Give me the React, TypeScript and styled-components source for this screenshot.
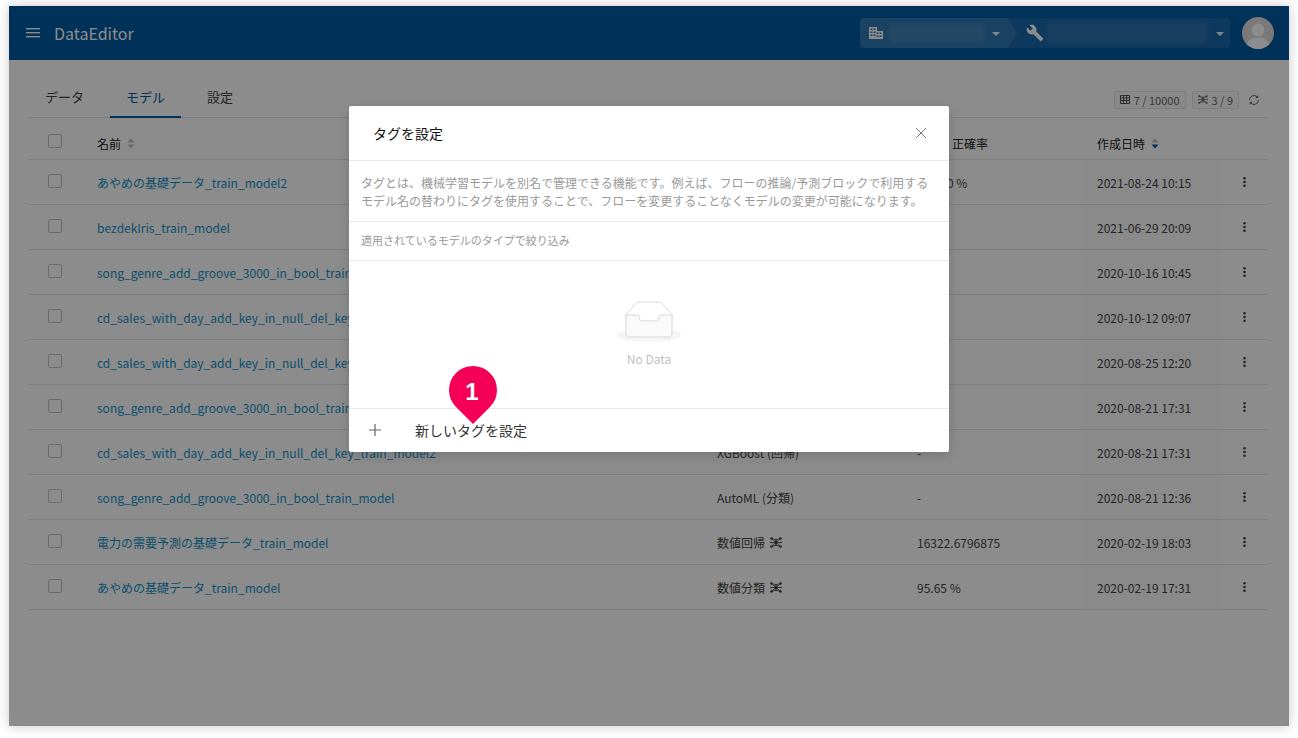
import React from 'react';
import styled, { createGlobalStyle } from 'styled-components';

const Global = createGlobalStyle`
  html, body { margin: 0; padding: 0; background: #fff; }
  body { font-family: "Noto Sans CJK JP", "Noto Sans", sans-serif; }
  * { box-sizing: border-box; }
`;
const Page = styled.div`padding: 6px 9px; height: 738px; overflow: hidden;`;
const Frame = styled.div`
  position: relative; width: 1280px; height: 720px; background: #fff;
  box-shadow: 0 0 12px rgba(0,0,0,.22); overflow: hidden; color: #333;
`;
const Header = styled.header`
  height: 54px; background: #0059a2; color: #fff; display: flex; align-items: center; padding: 0 15px 0 17px;
`;
const Burger = styled.svg`width: 14px; height: 12px; margin-right: 14px; margin-top: -1px;`;
const Brand = styled.div`font-size: 16px; flex: 1;`;
const Combo = styled.div`
  width: 370px; height: 30px; border-radius: 4px; background: rgba(255,255,255,.1);
  display: flex; align-items: center; position: relative; margin-right: 12px;
`;
const ComboLeft = styled.div`
  width: 157px; height: 100%; display: flex; align-items: center; padding-left: 9px; position: relative; flex: none;
  background: rgba(255,255,255,.1); border-radius: 4px 0 0 4px;
  clip-path: polygon(0 0, 148px 0, 157px 50%, 148px 100%, 0 100%);
`;
const ComboRight = styled.div`
  flex: 1; height: 100%; display: flex; align-items: center; padding-left: 9px; position: relative;
`;
const Blurred = styled.div<{ $w: number; $gap: number }>`
  width: ${p => p.$w}px; height: 20px; margin-left: ${p => p.$gap}px; background: rgba(255,255,255,.08); filter: blur(2px);
`;
const Caret = styled.div<{ $r: number }>`
  position: absolute; right: ${p => p.$r}px; top: 14px; width: 0; height: 0;
  border-left: 4.500px solid transparent; border-right: 4.500px solid transparent; border-top: 4px solid rgba(255,255,255,.95);
`;
const Avatar = styled.svg`width: 32px; height: 32px; border-radius: 50%;`;

const Main = styled.main`padding: 19px 21px 0 19px;`;
const TabBar = styled.div`
  height: 39px; border-bottom: 1px solid #e4e4e4; display: flex; align-items: stretch; padding-left: 1px; gap: 10px; position: relative;
`;
const Tab = styled.div<{ $active?: boolean }>`
  padding: 0 16px; font-size: 13px; line-height: 36px; height: 39px;
  color: ${p => p.$active ? '#00599f' : '#444'};
  border-bottom: 2px solid ${p => p.$active ? '#00599f' : 'transparent'};
`;
const Stats = styled.div`margin-left: auto; display: flex; align-items: center; gap: 6px; padding: 11px 8px 0 0; height: 30px;`;
const Chip = styled.div`
  height: 18px; border: 1px solid #e4e4e4; background: #fafafa; border-radius: 2px; display: flex; align-items: center; gap: 4px;
  padding: 0 5px; font-size: 11px; color: #666;
`;
const Sync = styled.svg`width: 12px; height: 12px; margin-left: 3px;`;

const Row = styled.div<{ $head?: boolean }>`
  display: grid; grid-template-columns: 53px 620px 200px 180px 140px 47px;
  height: ${p => p.$head ? 42 : 45}px; border-bottom: 1px solid #e4e4e4; font-size: 12px; color: #444;
  align-items: stretch;
`;
const Cell = styled.div<{ $sorted?: boolean; $head?: boolean }>`
  display: flex; align-items: center; padding: ${p => p.$head ? '10px 16px 0' : '0 16px'}; white-space: nowrap;
  background: ${p => p.$sorted ? '#fbfbfb' : 'transparent'}; gap: 6px;
`;
const HeadCell = styled(Cell)`font-weight: 400; color: #222; background: transparent;`;
const CheckCell = styled.div<{ $head?: boolean }>`
  display: flex; padding: ${p => p.$head ? '16px 0 0 20px' : '14px 0 0 20px'};
`;
const Check = styled.div`width: 14px; height: 14px; border: 1px solid #c4c4c4; border-radius: 2px; background: #fff;`;
const NameLink = styled.span`color: #1490c8;`;
const Spacer = styled.span`display: inline-block; width: 29px;`;
const SortIcon = styled.svg`width: 8px; height: 11px;`;
const Kebab = styled.svg`width: 3px; height: 10px; margin: 17px 0 0 22px; display: block;`;

const Overlay = styled.div`
  position: absolute; inset: 0; background: rgba(0,0,0,.45); display: flex; justify-content: center; padding-top: 100px;
`;
const Modal = styled.div`
  position: relative; width: 600px; height: 346px; background: #fff; border-radius: 2px; display: flex; flex-direction: column;
  box-shadow: 0 4px 12px rgba(0,0,0,.15);
`;
const ModalHead = styled.div`
  height: 55px; border-bottom: 1px solid #e8e8e8; padding: 0 22px 0 24px; display: flex; align-items: center; justify-content: space-between;
  font-size: 14px; font-weight: 400; color: #111;
`;
const Desc = styled.div`
  height: 61px; border-bottom: 1px solid #e8e8e8; padding: 13px 12px 0; font-size: 12px; line-height: 18px; color: #999;
`;
const Filter = styled.div`
  height: 39px; border-bottom: 1px solid #e8e8e8; padding: 0 12px 2px; display: flex; align-items: center; font-size: 11px; color: #999;
`;
const Empty = styled.div`
  flex: 1; border-bottom: 1px solid #e8e8e8; display: flex; flex-direction: column; align-items: center; padding-top: 40px;
  font-size: 12px; color: #bfbfbf;
`;
const EmptyIcon = styled.svg`width: 64px; height: 41px; margin-bottom: 8px;`;
const Footer = styled.div`
  height: 43px; display: flex; align-items: center; font-size: 14px; color: #333; padding: 0 0 1px 19px;
`;
const Plus = styled.svg`width: 14px; height: 14px; margin: -1px 33px 0 0;`;
const Pin = styled.div`
  position: absolute; left: 100px; top: 260px; width: 48px; height: 48px; display: flex; align-items: center; justify-content: center;
  &::before { content: ""; position: absolute; inset: 0; background: #f50057; border-radius: 50% 50% 50% 0; transform: rotate(-45deg); }
`;
const PinNum = styled.span`
  position: relative; color: #fff; font-family: "Liberation Sans", sans-serif; font-size: 24px; font-weight: 700; padding: 3px 2px 0 0;
`;
const NetMark = styled.span`display: inline-flex; margin-left: -1px;`;

const Net = ({ w = 12 }: { w?: number }) => (
  <svg width={w} height={w - 1} viewBox="0 0 12 11" fill="none" stroke="currentColor">
    <path d="M1.500 1.500L10.500 9.500M10.500 1.500L1.500 9.500M.8 5.500H4M8 5.500H11.200M6 2.800V8.200M1.500 1.500L6 2.800L10.500 1.500M1.500 9.500L6 8.200L10.500 9.500" strokeWidth=".8" />
    <circle cx="1.500" cy="1.500" r="1.300" fill="currentColor" stroke="none" /><circle cx="10.500" cy="1.500" r="1.300" fill="currentColor" stroke="none" />
    <circle cx="1.500" cy="9.500" r="1.300" fill="currentColor" stroke="none" /><circle cx="10.500" cy="9.500" r="1.300" fill="currentColor" stroke="none" />
    <circle cx="6" cy="5.500" r="1.800" fill="currentColor" stroke="none" />
    <circle cx="6" cy="2.800" r=".8" fill="currentColor" stroke="none" /><circle cx="6" cy="8.200" r=".8" fill="currentColor" stroke="none" />
    <circle cx=".9" cy="5.500" r=".8" fill="currentColor" stroke="none" /><circle cx="11.100" cy="5.500" r=".8" fill="currentColor" stroke="none" />
  </svg>
);

const rows = [
  { n: 'あやめの基礎データ_train_model2', t: '', a: '100.00 %', d: '2021-08-24 10:15' },
  { n: 'bezdekIris_train_model', t: '', a: '', d: '2021-06-29 20:09' },
  { n: 'song_genre_add_groove_3000_in_bool_train_model5', t: '', a: '', d: '2020-10-16 10:45' },
  { n: 'cd_sales_with_day_add_key_in_null_del_key_train_model4', t: '', a: '', d: '2020-10-12 09:07' },
  { n: 'cd_sales_with_day_add_key_in_null_del_key_train_model3', t: '', a: '', d: '2020-08-25 12:20' },
  { n: 'song_genre_add_groove_3000_in_bool_train_model2', t: '', a: '', d: '2020-08-21 17:31' },
  { n: 'cd_sales_with_day_add_key_in_null_del_key_train_model2', t: 'XGBoost (回帰)', a: '-', d: '2020-08-21 17:31' },
  { n: 'song_genre_add_groove_3000_in_bool_train_model', t: 'AutoML (分類)', a: '-', d: '2020-08-21 12:36' },
  { n: '電力の需要予測の基礎データ_train_model', t: '数値回帰', net: true, a: '16322.6796875', d: '2020-02-19 18:03' },
  { n: 'あやめの基礎データ_train_model', t: '数値分類', net: true, a: '95.65 %', d: '2020-02-19 17:31' },
];

const Sort = ({ on }: { on?: boolean }) => (
  <SortIcon viewBox="0 0 8 11">
    <path d="M4 0.500L7.500 4.500H0.500Z" fill="#bfbfbf" />
    <path d="M4 10.500L7.500 6.500H0.500Z" fill={on ? '#00599f' : '#bfbfbf'} />
  </SortIcon>
);

const Menu = () => (
  <Kebab viewBox="0 0 3 10" fill="#444">
    <circle cx="1.500" cy="1.300" r="1.300" /><circle cx="1.500" cy="5" r="1.300" /><circle cx="1.500" cy="8.700" r="1.300" />
  </Kebab>
);

export default function App() {
  return (
    <Page>
      <Global />
      <Frame>
        <Header>
          <Burger viewBox="0 0 14 12" fill="#fff"><rect y="1" width="14" height="1.400" /><rect y="5" width="14" height="1.400" /><rect y="9" width="14" height="1.400" /></Burger>
          <Brand>DataEditor</Brand>
          <Combo>
            <ComboLeft>
              <svg width="14" height="12" viewBox="0 0 14 12" fill="#fff"><path d="M0 0h8v4h6v8H0zM1.500 1.500v1.500h2V1.500zm3 0v1.500h2V1.500zM1.500 4.500V6h2V4.500zm3 0V6h2V4.500zM1.500 7.500V9h2V7.500zm3 0V9h2V7.500zm3-2V7h2V5.500zm3 0V7h2V5.500zm-3 3V10h2V8.500zm3 0V10h2V8.500z" fillRule="evenodd" /></svg>
              <Blurred $w={96} $gap={6} />
              <Caret $r={17} />
            </ComboLeft>
            <ComboRight>
              <svg width="18" height="18" viewBox="0 0 24 24" fill="#fff"><path d="M22.700 19l-9.100-9.100c.9-2.300.4-5-1.500-6.900-2-2-5-2.400-7.400-1.300L9 6 6 9 1.600 4.700C.4 7.100.9 10.100 2.900 12.100c1.900 1.900 4.600 2.400 6.900 1.500l9.100 9.100c.4.400 1 .4 1.400 0l2.300-2.300c.5-.4.500-1.100.1-1.400z" /></svg>
              <Blurred $w={160} $gap={3} />
              <Caret $r={6} />
            </ComboRight>
          </Combo>
          <Avatar viewBox="0 0 32 32"><rect width="32" height="32" fill="#dcdcdc" /><circle cx="16" cy="13" r="6.500" fill="#fff" /><path d="M4 32c0-9 6-11.500 12-11.500S28 23 28 32z" fill="#fff" /></Avatar>
        </Header>
        <Main>
          <TabBar>
            <Tab>データ</Tab>
            <Tab $active>モデル</Tab>
            <Tab>設定</Tab>
            <Stats>
              <Chip>
                <svg width="10" height="9" viewBox="0 0 10 9" fill="none" stroke="#555"><path d="M.5.5h9v8h-9zM.5 3h9M.5 5.500h9M3.500 1v7M6.500 1v7" /></svg>
                7 / 10000
              </Chip>
              <Chip><Net w={10} />3 / 9</Chip>
              <Sync viewBox="0 0 12 12" fill="none" stroke="#666"><path d="M1.500 6a4.500 4.500 0 0 1 8-2.800M10.500 6a4.500 4.500 0 0 1-8 2.800" /><path d="M9.800 1.500v2H7.800M2.200 10.500v-2h2" /></Sync>
            </Stats>
          </TabBar>
          <Row $head>
            <CheckCell $head><Check /></CheckCell>
            <HeadCell $head>名前 <Sort /></HeadCell>
            <HeadCell $head />
            <HeadCell $head><Spacer />正確率</HeadCell>
            <HeadCell $head>作成日時 <Sort on /></HeadCell>
            <HeadCell $head />
          </Row>
          {rows.map(r => (
            <Row key={r.n}>
              <CheckCell><Check /></CheckCell>
              <Cell><NameLink>{r.n}</NameLink></Cell>
              <Cell>{r.t}{r.net && <NetMark><Net /></NetMark>}</Cell>
              <Cell>{r.a}</Cell>
              <Cell $sorted>{r.d}</Cell>
              <div><Menu /></div>
            </Row>
          ))}
        </Main>
        <Overlay>
          <Modal>
            <ModalHead>
              タグを設定
              <svg width="12" height="12" viewBox="0 0 12 12" stroke="#777" fill="none"><path d="M1 1L11 11M11 1L1 11" /></svg>
            </ModalHead>
            <Desc>タグとは、機械学習モデルを別名で管理できる機能です。例えば、フローの推論/予測ブロックで利用するモデル名の替わりにタグを使用することで、フローを変更することなくモデルの変更が可能になります。</Desc>
            <Filter>適用されているモデルのタイプで絞り込み</Filter>
            <Empty>
              <EmptyIcon viewBox="0 0 64 41">
                <g transform="translate(0 1)" fill="none" fillRule="evenodd">
                  <ellipse fill="#f5f5f5" cx="32" cy="33" rx="32" ry="7" />
                  <g fillRule="nonzero" stroke="#d9d9d9">
                    <path d="M55 12.76L44.854 1.258C44.367.474 43.656 0 42.907 0H21.093c-.749 0-1.46.474-1.947 1.257L9 12.761V22h46v-9.24z" />
                    <path d="M41.613 15.931c0-1.605.994-2.93 2.227-2.931H55v18.137C55 33.26 53.68 35 52.05 35h-40.1C10.32 35 9 33.259 9 31.137V13h11.16c1.233 0 2.227 1.323 2.227 2.928v.022c0 1.605 1.005 2.901 2.237 2.901h14.752c1.232 0 2.237-1.308 2.237-2.913v-.007z" fill="#fafafa" />
                  </g>
                </g>
              </EmptyIcon>
              No Data
            </Empty>
            <Footer>
              <Plus viewBox="0 0 14 14" stroke="#666" fill="none" strokeWidth="1.200"><path d="M7 1v12M1 7h12" /></Plus>
              新しいタグを設定
            </Footer>
            <Pin><PinNum>1</PinNum></Pin>
          </Modal>
        </Overlay>
      </Frame>
    </Page>
  );
}
